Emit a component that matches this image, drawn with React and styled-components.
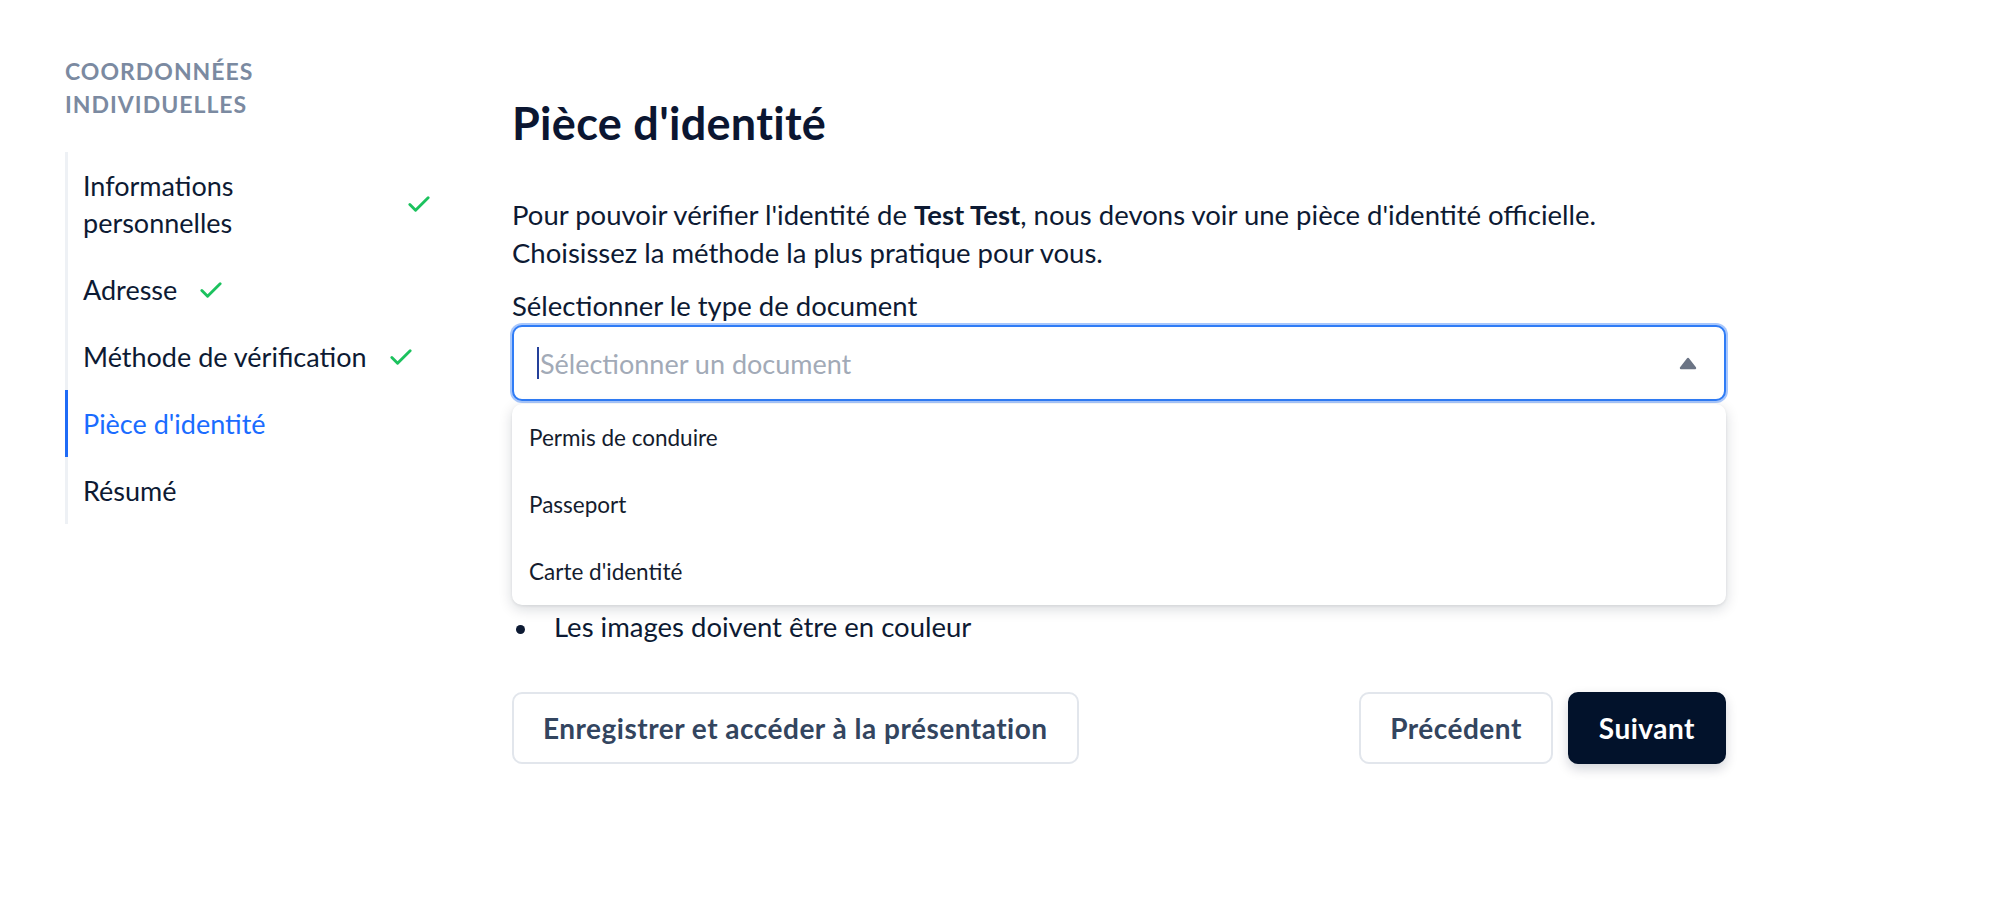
import React from "react";
import styled, { createGlobalStyle } from "styled-components";

const GlobalStyle = createGlobalStyle`
  html, body {
    margin: 0;
    padding: 0;
    background: #ffffff;
  }
  body {
    font-family: Lato, "Noto Sans", sans-serif;
    color: #0d1a33;
  }
  * { box-sizing: border-box; }
`;

const Page = styled.div`
  display: flex;
  align-items: flex-start;
  gap: 82px;
  padding-left: 65px;
  min-height: 912px;
`;

const Sidebar = styled.aside`
  width: 365px;
  flex-shrink: 0;
  padding-top: 55px;
`;

const SectionTitle = styled.h2`
  margin: 0;
  font-size: 23px;
  line-height: 33px;
  font-weight: 700;
  letter-spacing: 1px;
  text-transform: uppercase;
  color: #7b8aa1;
`;

const StepList = styled.ul`
  list-style: none;
  margin: 31px 0 0;
  padding: 0;
  border-left: 3px solid #eef1f5;
`;

const StepItem = styled.li`
  display: flex;
  align-items: center;
  gap: 23px;
  margin-left: -3px;
  padding: 15px 0 15px 15px;
  border-left: 3px solid ${(p) => (p.$active ? "#1f6bf6" : "transparent")};
  font-size: 27px;
  line-height: 37px;
  color: ${(p) => (p.$active ? "#1a6cff" : "#0d1a33")};
`;

const StepLabel = styled.span`
  flex: 0 1 auto;
`;

const CheckWrap = styled.span`
  display: flex;
  flex-shrink: 0;
  color: #1cc25e;
`;

const Check = () => (
  <CheckWrap>
    <svg width="22" height="16" viewBox="2.5 4.5 19 14" fill="none" stroke="currentColor" strokeWidth="2.5" strokeLinecap="round" strokeLinejoin="round">
      <path d="M20 6 9 17l-5-5" />
    </svg>
  </CheckWrap>
);

const Main = styled.main`
  width: 1214px;
  flex-shrink: 0;
  padding-top: 97px;
`;

const Title = styled.h1`
  margin: 0;
  font-size: 45px;
  line-height: 52px;
  font-weight: 700;
  letter-spacing: 0.3px;
  color: #0b1631;
`;

const Intro = styled.p`
  margin: 47px 0 0;
  font-size: 27.5px;
  line-height: 38px;

  strong { font-weight: 700; }
`;

const FieldLabel = styled.label`
  display: block;
  margin-top: 15px;
  font-size: 27.5px;
  line-height: 38px;
`;

const SelectWrap = styled.div`
  position: relative;
`;

const SelectBox = styled.div`
  display: flex;
  align-items: center;
  height: 76px;
  padding: 0 27px 0 23px;
  border: 2px solid #2f7cf6;
  border-radius: 10px;
  box-shadow: 0 0 0 2px rgba(96, 153, 250, 0.55);
  background: #fff;
`;

const Caret = styled.span`
  width: 2px;
  height: 32px;
  margin-right: 1px;
  background: #24409a;
`;

const Placeholder = styled.span`
  flex: 1;
  font-size: 27px;
  color: #a2aab7;
`;

const ArrowUp = () => (
  <svg width="18" height="13" viewBox="0 0 18 13">
    <path d="M9 2 L16 11 L2 11 Z" fill="#6b7485" stroke="#6b7485" strokeWidth="2.4" strokeLinejoin="round" />
  </svg>
);

const Menu = styled.ul`
  position: absolute;
  top: calc(100% + 3px);
  left: 0;
  right: 0;
  z-index: 5;
  list-style: none;
  margin: 0;
  padding: 0;
  background: #fff;
  border-radius: 10px;
  box-shadow: 0 4px 14px rgba(15, 23, 42, 0.16), 0 1px 3px rgba(15, 23, 42, 0.08);
`;

const MenuOption = styled.li`
  display: flex;
  align-items: center;
  height: 67px;
  padding: 0 17px;
  font-size: 22.5px;
  color: #141c2e;
`;

const BulletList = styled.ul`
  list-style: none;
  margin: 207px 0 0;
  padding: 0;
`;

const Bullet = styled.li`
  display: flex;
  align-items: center;
  font-size: 27.5px;
  line-height: 38px;

  &::before {
    content: "";
    width: 9px;
    height: 9px;
    margin: 4px 29px 0 4px;
    border-radius: 50%;
    background: #0d1a33;
    flex-shrink: 0;
  }
`;

const Actions = styled.div`
  display: flex;
  justify-content: space-between;
  align-items: center;
  margin-top: 46px;
`;

const ActionGroup = styled.div`
  display: flex;
  gap: 15px;
`;

const Button = styled.button`
  height: 72px;
  padding: 0 29px;
  border-radius: 10px;
  font-family: inherit;
  font-size: 28px;
  font-weight: 700;
  letter-spacing: 0.5px;
  cursor: pointer;
  border: 2px solid ${(p) => (p.$primary ? "#02122b" : "#e2e6ec")};
  background: ${(p) => (p.$primary ? "#02122b" : "#fff")};
  color: ${(p) => (p.$primary ? "#fff" : "#33455f")};
  box-shadow: ${(p) => (p.$primary ? "0 5px 12px rgba(2, 18, 43, 0.18)" : "none")};
`;

const steps = [
  { label: "Informations personnelles", done: true },
  { label: "Adresse", done: true },
  { label: "Méthode de vérification", done: true },
  { label: "Pièce d'identité", active: true },
  { label: "Résumé" },
];

const options = ["Permis de conduire", "Passeport", "Carte d'identité"];

export default function App() {
  return (
    <>
      <GlobalStyle />
      <Page>
        <Sidebar>
          <SectionTitle>
            Coordonnées
            <br />
            individuelles
          </SectionTitle>
          <StepList>
            {steps.map((s) => (
              <StepItem key={s.label} $active={s.active}>
                <StepLabel>{s.label}</StepLabel>
                {s.done && <Check />}
              </StepItem>
            ))}
          </StepList>
        </Sidebar>

        <Main>
          <Title>Pièce d'identité</Title>
          <Intro>
            Pour pouvoir vérifier l'identité de <strong>Test Test</strong>, nous devons voir une pièce d'identité officielle.
            <br />
            Choisissez la méthode la plus pratique pour vous.
          </Intro>
          <FieldLabel>Sélectionner le type de document</FieldLabel>
          <SelectWrap>
            <SelectBox>
              <Caret />
              <Placeholder>Sélectionner un document</Placeholder>
              <ArrowUp />
            </SelectBox>
            <Menu>
              {options.map((o) => (
                <MenuOption key={o}>{o}</MenuOption>
              ))}
            </Menu>
          </SelectWrap>

          <BulletList>
            <Bullet>Les images doivent être en couleur</Bullet>
          </BulletList>

          <Actions>
            <Button>Enregistrer et accéder à la présentation</Button>
            <ActionGroup>
              <Button>Précédent</Button>
              <Button $primary>Suivant</Button>
            </ActionGroup>
          </Actions>
        </Main>
      </Page>
    </>
  );
}
